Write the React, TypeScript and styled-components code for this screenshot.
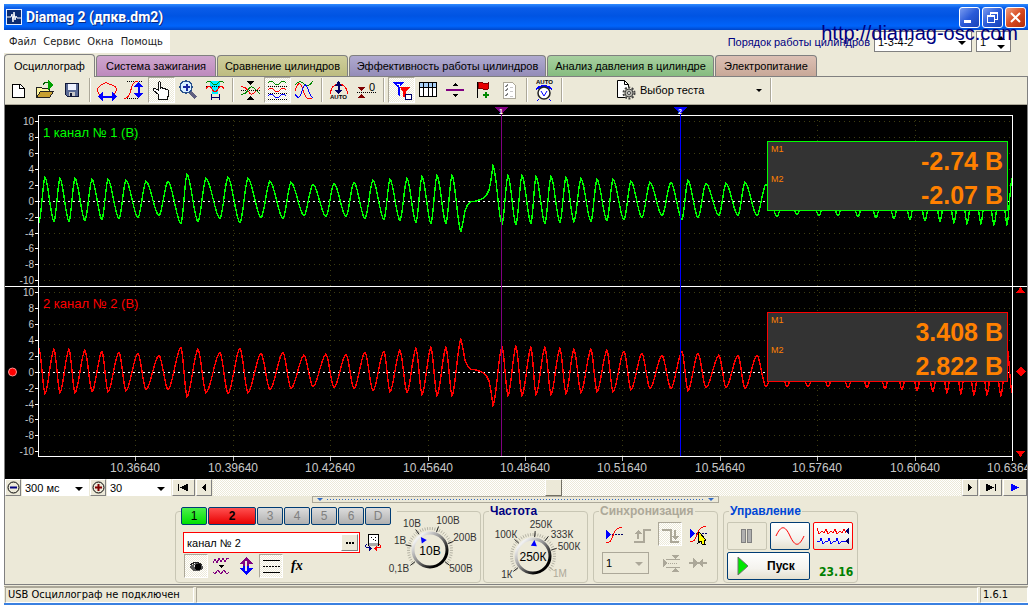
import React from 'react';
import styled, { createGlobalStyle, css } from 'styled-components';

const face = '#ece9d8';
const ui = '"Liberation Sans", Arial, sans-serif';
const tahoma = '"DejaVu Sans Condensed", "DejaVu Sans", sans-serif';

const checker = css`
  background: repeating-conic-gradient(#ffffff 0% 25%, ${face} 0% 50%) 0 0 / 2px 2px;
`;

const Global = createGlobalStyle`
  * { box-sizing: border-box; }
  body { margin: 0; background: #fff; font-family: ${ui}; font-size: 12px; color: #000; }
  button, input, select { font: inherit; color: inherit; margin: 0; padding: 0; border-radius: 0; }
  svg { display: block; }
`;

const Page = styled.div`
  padding: 4px;
`;

const Window = styled.main`
  position: relative;
  background: ${face};
  border-bottom: 2px solid #3a80e0;
`;

const TitleBar = styled.header`
  display: flex;
  align-items: center;
  height: 26px;
  padding: 0 2px;
  background: linear-gradient(#2f8bff 0, #0a5ce8 4px, #0054e3 12px, #0064fb 22px, #0046c8 100%);
`;

const Title = styled.h1`
  flex: 1;
  margin: 0 0 0 4px;
  font: bold 14px/20px Roboto, sans-serif;
  color: #fff;
  text-shadow: 1px 1px 0 #0a2a80;
`;

const CaptionButton = styled.button<{ $red?: boolean }>`
  width: 21px;
  height: 21px;
  margin-left: 2px;
  border: 1px solid #fff;
  border-radius: 3px;
  background: ${p => (p.$red ? 'linear-gradient(135deg, #f0a080, #d84a20 50%, #b02c08)' : 'linear-gradient(135deg, #7a9cf0, #2a5ad8 50%, #1844b8)')};
`;

const MenuRow = styled.div`
  display: flex;
  justify-content: space-between;
  height: 24px;
`;

const Menu = styled.nav`
  display: flex;
  gap: 7px;
  height: 23px;
  width: 166px;
  padding: 0 5px;
  background: #fff;
`;

const MenuItem = styled.a`
  font: 11px/24px ${tahoma};
  color: #222;
  text-decoration: none;
`;

const OrderBox = styled.div`
  display: flex;
  gap: 4px;
  padding: 1px 17px 0 0;
`;

const OrderLabel = styled.label`
  font-size: 11px;
  line-height: 22px;
  color: #000080;
`;

const SelectWrap = styled.span<{ $w: number; $h: number; $border?: string; $spin?: boolean }>`
  position: relative;
  display: block;
  width: ${p => p.$w}px;
  height: ${p => p.$h}px;
  &::after, &::before {
    content: '';
    position: absolute;
    right: 6px;
    top: 50%;
    border: 4px solid transparent;
    border-top-color: ${p => (p.$border === '#aca899' ? '#aca899' : '#000')};
    border-bottom: 0;
    margin-top: ${p => (p.$spin ? 3 : -1)}px;
    pointer-events: none;
  }
  &::before {
    display: ${p => (p.$spin ? 'block' : 'none')};
    margin-top: -6px;
    border-top: 0;
    border-bottom: 4px solid #000;
  }
  select {
    appearance: none;
    width: 100%;
    height: 100%;
    padding: 0 3px;
    border: ${p => (p.$border ? `1px solid ${p.$border}` : '0')};
    background: ${p => (p.$border === '#aca899' ? face : '#fff')};
    opacity: 1;
    font-size: 11px;
  }
`;

const Tabs = styled.div`
  display: flex;
  gap: 1px;
  height: 23px;
  border-bottom: 1px solid #808080;
  align-items: flex-end;
`;

const Tab = styled.button<{ $w: number; $tint: string; $active?: boolean }>`
  width: ${p => p.$w}px;
  height: ${p => (p.$active ? 23 : 21)}px;
  margin-bottom: ${p => (p.$active ? -1 : 0)}px;
  border: 1px solid #808080;
  border-bottom: 0;
  border-radius: 4px 4px 0 0;
  background: ${p => p.$tint};
  font-size: 11px;
  white-space: nowrap;
`;

const Body = styled.div`
  border-left: 1px solid #808080;
  border-right: 1px solid #808080;
  border-bottom: 1px solid #808080;
`;

const Toolbar = styled.div`
  display: flex;
  align-items: center;
  height: 28px;
  padding-bottom: 1px;
  border-bottom: 1px solid #aca899;
`;

const ToolButton = styled.button<{ $on?: boolean }>`
  width: 27px;
  height: 26px;
  border: 1px solid transparent;
  background: transparent;
  ${p => p.$on && css`
    ${checker}
    border-color: #aca899 #fff #fff #aca899;
  `}
  svg { margin: -1px; }
`;

const Separator = styled.i`
  width: 2px;
  height: 24px;
  margin: 0 3px;
  border-left: 1px solid #aca899;
  border-right: 1px solid #fff;
`;

const TestButton = styled.button`
  display: flex;
  align-items: center;
  gap: 4px;
  width: 201px;
  height: 26px;
  padding: 0 4px 0 49px;
  border: 0;
  background: transparent;
  font-size: 11px;
  white-space: nowrap;
  span { flex: 1; text-align: left; }
`;

const Scope = styled.div`
  position: relative;
  background: #000;
  svg { width: 100%; }
`;

const Readout = styled.dl<{ $top: number; $c: string }>`
  position: absolute;
  right: 19px;
  top: ${p => p.$top}px;
  width: 241px;
  height: 70px;
  margin: 0;
  padding: 2px 4px 2px 3px;
  border: 1px solid ${p => p.$c};
  background: #333;
  color: #ff8000;
`;

const ReadoutRow = styled.div`
  display: flex;
  justify-content: space-between;
  height: 30px;
  & + & { height: 34px; }
  dt { font-size: 9px; line-height: 10px; }
  dd { margin: 0; font-weight: bold; font-size: 25px; line-height: 34px; }
  & + & dd { line-height: 42px; }
`;

const ScrollRow = styled.div`
  display: flex;
  height: 17px;
  gap: 1px;
`;

const FlatButton = styled.button<{ $w: number }>`
  display: grid;
  place-items: center;
  flex: none;
  width: ${p => p.$w}px;
  height: 17px;
  border: 1px solid;
  border-color: #fff #808080 #808080 #fff;
  background: ${face};
`;

const Track = styled.div`
  ${checker}
  flex: 1;
  display: flex;
  &::before { content: ''; flex: 5; }
  &::after { content: ''; flex: 6; }
`;

const Thumb = styled.i`
  width: 17px;
  height: 17px;
  border: 1px solid;
  border-color: #fff #716f64 #716f64 #fff;
  background: ${face};
`;

const Splitter = styled.div`
  display: flex;
  align-items: center;
  justify-content: space-between;
  width: 407px;
  height: 7px;
  margin: 0 0 1px 307px;
  padding: 0 4px;
  border: 1px solid #aca899;
  &::before, &::after {
    content: '';
    border: 3px solid transparent;
    border-top-color: #316ac5;
    border-bottom: 0;
  }
  i {
    flex: 1;
    height: 1px;
    margin: 0 4px;
    background: repeating-linear-gradient(90deg, #316ac5 0 1px, transparent 1px 3px);
  }
`;

const Panels = styled.div`
  display: flex;
  align-items: flex-start;
  padding: 0 0 1px 170px;
`;

const ChannelPanel = styled.div`
  display: flex;
  width: 306px;
  height: 72px;
  margin: 7px 2px 0 0;
  border: 1px solid #c8c6b4;
  border-radius: 4px;
`;

const ChannelColumn = styled.div`
  flex: none;
  width: 210px;
`;

const ChannelRow = styled.div`
  display: flex;
  gap: 1px;
  width: 216px;
  margin: -5px 0 7px 5px;
  background: ${face};
`;

const fills = {
  green: 'linear-gradient(#4cf04c, #00e000)',
  red: 'linear-gradient(#ff5050, #e80000)',
  grey: 'linear-gradient(#dcdcdc, #b0b0b0)',
};

const ChannelButton = styled.button<{ $fill: keyof typeof fills }>`
  width: ${p => (p.$fill === 'red' ? 48 : 26)}px;
  height: 18px;
  border: 1px solid #003c74;
  border-radius: 2px;
  background: ${p => fills[p.$fill]};
  color: ${p => (p.$fill === 'grey' ? '#808080' : '#000')};
  font-size: 12px;
  font-weight: ${p => (p.$fill === 'red' ? 'bold' : 'normal')};
`;

const NameRow = styled.div`
  display: flex;
  gap: 4px;
  height: 21px;
  margin: 0 0 1px 7px;
`;

const NameBox = styled.div`
  display: flex;
  width: 177px;
  padding: 1px;
  border: 1px solid #f00;
  background: #fff;
  input { flex: 1; min-width: 0; padding: 0 2px; border: 0; outline: 0; background: transparent; font-size: 11px; }
`;

const IconRow = styled.div<{ $gap: number; $pad?: number }>`
  display: flex;
  align-items: center;
  gap: ${p => p.$gap}px;
  margin-left: ${p => p.$pad || 0}px;
`;

const IconButton = styled.button<{ $on?: boolean }>`
  width: 24px;
  height: 24px;
  border: 1px solid transparent;
  background: transparent;
  ${p => p.$on && css`
    ${checker}
    border-color: #aca899 #fff #fff #aca899;
  `}
  svg { margin: -1px; }
`;

const Group = styled.fieldset<{ $w: number; $gap: number }>`
  width: ${p => p.$w}px;
  height: 79px;
  min-width: 0;
  margin: 0 ${p => p.$gap}px 0 0;
  padding: 0;
  border: 1px solid #c8c6b4;
  border-radius: 4px;
`;

const Legend = styled.legend<{ $c: string }>`
  margin-left: 5px;
  padding: 0 1px;
  font-weight: bold;
  font-size: 12px;
  line-height: 14px;
  color: ${p => p.$c};
`;

const SyncBody = styled.div`
  display: grid;
  gap: 5px;
  padding: 4px 0 0 8px;
`;

const ControlGrid = styled.div`
  display: grid;
  grid-template-columns: 40px 40px 40px;
  grid-template-rows: 28px 28px;
  gap: 2px 3px;
  padding: 4px 0 0 3px;
`;

const ControlButton = styled.button<{ $c: string }>`
  display: grid;
  place-items: center;
  border: 1px solid ${p => p.$c};
  border-radius: 2px;
  background: linear-gradient(#fff, #f4f3ee 60%, #e4e0d0);
  &:disabled { background: ${face}; }
`;

const StartButton = styled(ControlButton)`
  grid-column: span 2;
  display: flex;
  align-items: center;
  gap: 18px;
  padding-left: 9px;
  font-weight: bold;
  font-size: 12px;
`;

const Version = styled.output`
  align-self: center;
  padding: 12px 0 0 6px;
  font: bold 12px/14px ${tahoma};
  color: #008000;
`;

const StatusBar = styled.footer`
  display: flex;
  gap: 2px;
  height: 17px;
  margin-top: 1px;
  border-top: 1px solid #aca899;
  padding-left: 1px;
`;

const StatusCell = styled.span<{ $w?: number }>`
  flex: ${p => (p.$w ? 'none' : 1)};
  width: ${p => (p.$w ? `${p.$w}px` : 'auto')};
  padding-left: 2px;
  border: 1px solid;
  border-color: #aca899 #fff #fff #aca899;
  font: 11px/14px ${tahoma};
  white-space: nowrap;
  overflow: hidden;
`;

const Watermark = styled.a`
  position: absolute;
  right: 10px;
  top: 17px;
  font-size: 20px;
  line-height: 24px;
  color: #000080;
  text-decoration: none;
`;

/* ---------- icons ---------- */

const T = ({ children, w = 27, h = 26 }: { children: React.ReactNode; w?: number; h?: number }) => (
  <svg width={w} height={h} viewBox={`0 0 ${w} ${h}`} fill="none" shapeRendering="crispEdges" aria-hidden="true">
    {children}
  </svg>
);

const wave = (y: number, a: number) => `M4 ${y}q3 ${-a * 2} 6 0t6 0t6 0`;

type Tool = { name: string; on?: boolean; art: React.ReactNode } | null;

const tools: Tool[] = [
  { name: 'Новый', art: <T><path d="M7.500 7.500h8l4 4v9h-12z" fill="#fff" stroke="#000" /><path d="M14.500 7.500v4h4" stroke="#000" /></T> },
  { name: 'Открыть', art: <T>
    <path d="M4.500 20.500v-10h5l1 1h7v3" fill="#fdf6a0" stroke="#222" /><path d="M4.500 20.500l4-6h13l-4 6z" fill="#c8a030" stroke="#222" />
    <path d="M16 3l6 5l-6 5z" fill="#00a000" /><path d="M11 8q2-4 5-2" stroke="#006000" /></T> },
  { name: 'Сохранить', art: <T>
    <path d="M6.500 6.500h13v13h-11l-2-2z" fill="#5a6a94" stroke="#101838" /><path d="M9 7h8v6h-8z" fill="#eef2ff" /><path d="M10 15h6v4h-6z" fill="#c8c8c8" /><path d="M11 16h2v3h-2z" fill="#101838" /></T> },
  null,
  { name: 'Развёртка', art: <T>
    <path d="M6 18q-5-5 0-9t7-3t7 3t0 9" stroke="#f00" /><path d="M5 19.500h17" stroke="#00f" strokeWidth="2" /><path d="M9 15v9l-5-4.500zM18 15v9l5-4.500z" fill="#00f" /></T> },
  { name: 'Усиление', art: <T>
    <path d="M6 4.500h16M4 21.500h14" stroke="#000" strokeDasharray="1 1" /><path d="M3 21.500q5 0 7-9t7-8" stroke="#f00" />
    <path d="M17.500 8v10" stroke="#00f" strokeWidth="2" /><path d="M13 10h9l-4.500-5zM13 16h9l-4.500 5z" fill="#00f" /></T> },
  { name: 'Рука', on: true, art: <T>
    <path d="M10.500 20.500v-3l-5-4v-2h2l3 2v-8q1-2 2 0v6q1-2 2-1v1q1-1 3 0v1q1-1 3 1v5l-1 2v2h-9z" fill="#fff" stroke="#111" /></T> },
  { name: 'Масштаб', art: <T>
    <path d="M15 15l6 6" stroke="#606080" strokeWidth="3" /><circle cx="11" cy="10" r="6" fill="#d8f0ff" stroke="#28508c" strokeWidth="1.500" /><path d="M8 10h7M11.500 6.500v7" stroke="#1828a0" strokeWidth="2" /></T> },
  { name: 'Интервал', art: <T>
    <path d="M8 4h10v4l-2 4v5h-6v-5l-2-4z" fill="#00f0ff" /><path d={wave(6, 2)} stroke="#080" /><path d="M4 9.500h18" stroke="#000" strokeDasharray="1 1" /><path d={wave(12, 3)} stroke="#f00" />
    <path d="M9.500 17v6M17.500 17v6M10 20.500h7" stroke="#006" /></T> },
  null,
  { name: 'Наложить', art: <T>
    <path d="M4 13.500h19" stroke="#000" strokeDasharray="1 1" /><path d="M4 10q4-1 7 4t6 2t6-6" stroke="#f00" /><path d="M4 17q4 1 7-4t6-2t6 6" stroke="#080" /><path d="M10 4h7l-3.500 4zM10 23h7l-3.500-4z" fill="#000" /></T> },
  { name: 'Раздельно', on: true, art: <T>
    <path d={wave(6, 2)} stroke="#080" /><path d="M4 9.500h19M4 16.500h19M4 22.500h19" stroke="#000" strokeDasharray="1 1" /><path d={wave(13, 2)} stroke="#f00" /><path d={wave(19, 2)} stroke="#00f" /></T> },
  { name: 'Вместе', art: <T>
    <path d="M4 8q5-6 9-1t9-3" stroke="#080" /><path d="M4 14q4-14 8-1t10 7" stroke="#f00" /><path d="M4 17q4 8 7-3t6-2t5 8" stroke="#00f" /></T> },
  null,
  { name: 'Авто', art: <T>
    <path d="M5 17q-1-6 4-9t9 1t3 8" stroke="#f00" /><path d="M12.500 7v8" stroke="#006" strokeWidth="2" /><path d="M9 9h7l-3.500-5zM9 13h7l-3.500 4z" fill="#006" />
    <text x="4" y="22" fontSize="6" fontWeight="bold" fill="#000">AUTO</text></T> },
  { name: 'Сброс нуля', art: <T>
    <path d="M4 15.500h19" stroke="#000" strokeDasharray="1 1" /><path d="M5 10h7l-3.500 4zM5 21h7l-3.500-4z" fill="#800000" /><text x="16" y="14" fontSize="11" fill="#000">0</text></T> },
  null,
  { name: 'Маркеры', on: true, art: <T>
    <path d="M5 5h11l-4 5v9l-2-1v-7z" fill="#00f" /><path d="M12 10h10l-4 5v6l-3-1v-5z" fill="#f00" /><path d="M9 7h2v3" stroke="#fff" /><path d="M17.500 17.500h6v5h-6z" fill="#fff" stroke="#006" /></T> },
  { name: 'Таблица', art: <T>
    <path d="M4.500 5.500h17v14h-17z" fill="#fff" stroke="#000" /><path d="M5 6h16v4h-16z" fill="#a8d0f8" /><path d="M4 10.500h18M8.500 6v14M13.500 6v14M17.500 6v14" stroke="#000" /></T> },
  { name: 'Разделитель', art: <T>
    <path d="M4 13h18" stroke="#800080" strokeWidth="2" /><path d="M10 9h6l-3-3zM10 17h6l-3 3z" fill="#000" /></T> },
  { name: 'Флаг', art: <T>
    <path d="M8.500 5v16" stroke="#000" /><path d="M9 6q3-2 5 0t5 0v6q-2 2-5 0t-5 0z" fill="#e80000" stroke="#800000" /><path d="M14 18h6M17 15v6" stroke="#080" strokeWidth="2" /></T> },
  { name: 'Список', art: <T>
    <path d="M7.500 5.500h9l3 3v13h-12z" fill="#fff" stroke="#aca899" /><path d="M9 9l1 1l2-3M9 13l1 1l2-3M9 18l1 1l2-3" stroke="#808080" /><path d="M14 10h3M14 14h3M14 19h3" stroke="#c8c8c8" /></T> },
  null,
  { name: 'Автоматическое измерение', art: <T>
    <text x="5" y="7" fontSize="6" fontWeight="bold" fill="#000">AUTO</text><path d="M5 12q8-6 16 0" stroke="#00f" strokeWidth="2" /><circle cx="13" cy="16" r="6" fill="#fff" stroke="#222" strokeWidth="1.500" shapeRendering="auto" />
    <path d="M10 14l3 5l3-5M8 22l-2 2M18 22l2 2" stroke="#00f" shapeRendering="auto" /></T> },
  null,
];

/* ---------- signal data: alternating extremes of the first channel ---------- */

const points: [number, number][] = [
  [39, 223], [45, 177], [54, 222], [60, 178], [69, 222], [75, 178], [85, 221], [92, 179], [102, 220], [108, 179],
  [119, 219], [126, 180], [138, 218], [146, 181], [159, 216], [168, 181], [181, 224], [187, 174], [198, 222], [206, 178],
  [220, 219], [228, 177], [240, 223], [248, 178], [261, 218], [270, 181], [283, 219], [291, 182], [304, 216], [313, 184],
  [326, 217], [334, 183], [346, 217], [354, 182], [365, 219], [373, 180], [384, 220], [390, 179], [400, 221], [407, 178],
  [416, 223], [422, 176], [431, 224], [437, 175], [446, 224], [452, 175], [461, 232],
];
const gap: [number, number][] = [[463, 222], [465, 211], [467, 206], [470, 202], [476, 201], [482, 199], [486, 196], [489, 190], [491, 180], [493, 165]];
const tail: [number, number][] = [
  [493, 165], [502, 225], [508, 175], [516, 225], [522, 175], [531, 224], [536, 176], [545, 224], [551, 176], [560, 223], [566, 177],
  [574, 222], [581, 178], [591, 222], [597, 179], [607, 221], [613, 179], [624, 220], [631, 181], [642, 218], [650, 182],
  [662, 216], [671, 182], [682, 220], [688, 180], [698, 218], [706, 183], [719, 216], [726, 183], [738, 216], [745, 182],
  [757, 216], [766, 184], [777, 217], [787, 184], [797, 215], [808, 184], [819, 216], [828, 184], [838, 216], [848, 183],
  [858, 217], [867, 183], [876, 218], [885, 182], [894, 219], [902, 181], [910, 220], [917, 180], [925, 221], [933, 179],
  [940, 222], [947, 178], [954, 223], [961, 177], [967, 224], [974, 176], [981, 224], [987, 176], [994, 225], [1001, 175],
  [1007, 225], [1012, 178],
];

const smooth = (list: [number, number][]) => {
  const out: [number, number][] = [list[0]];
  for (let i = 1; i < list.length; i++) {
    const [x0, y0] = list[i - 1];
    const [x1, y1] = list[i];
    for (let x = x0 + 1; x <= x1; x++) {
      const t = (x - x0) / (x1 - x0);
      const ease = (1 - Math.cos(Math.PI * t)) / 2;
      out.push([x, y0 + (y1 - y0) * (0.7 * ease + 0.3 * t)]);
    }
  }
  return out;
};

const trace = [...smooth(points), ...gap, ...smooth(tail)];
const line = (f: (y: number) => number) => trace.map(([x, y]) => `${x},${Math.round(f(y) * 10) / 10}`).join(' ');

const ticks1 = [121, 137, 153, 169, 185, 201, 217, 233, 248, 264, 280];
const ticks2 = ticks1.map(y => y + 171);
const columns = [135, 233, 330, 428, 525, 622, 720, 817, 915];
const times = ['10.36640', '10.39640', '10.42640', '10.45640', '10.48640', '10.51640', '10.54640', '10.57640', '10.60640'];

const Chart = () => (
  <svg viewBox="5 105 1022 374" fontFamily={ui} shapeRendering="crispEdges" role="img" aria-label="Осциллограмма">
    {[...ticks1, ...ticks2].map(y => (
      <path key={y} d={`M44 ${y}.5H1010`} stroke="#3c3c10" strokeDasharray="1 4" />
    ))}
    {columns.map(x => (
      <g key={x}>
        <path d={`M${x}.500 120V456`} stroke="#3c3c10" strokeDasharray="1 4" />
        <path d={`M${x}.500 457v4`} stroke="#c0c0c0" />
      </g>
    ))}
    <path d="M38 201.500H1012M38 372.500H1012" stroke="#fff" strokeDasharray="2 3" />
    <polyline points={line(y => y)} fill="none" stroke="#00ff00" strokeWidth="1.400" strokeLinejoin="round" />
    <polyline points={line(y => 571 - y)} fill="none" stroke="#ff0000" strokeWidth="1.400" strokeLinejoin="round" />
    <path d="M38.500 456.500V115.500H1012.500V456.500zM5 286.500H1027M1012.500 457v4" fill="none" stroke="#fff" />
    {[ticks1, ticks2].map(list => list.map((y, i) => (
      <g key={y}>
        <path d={`M35 ${y}.5h3`} stroke="#fff" />
        <text x="34" y={y + 4} fontSize="10" fill="#c8c8c8" textAnchor="end">{10 - i * 2}</text>
      </g>
    )))}
    <text x="43" y="137" fontSize="13" fill="#00ff00">1 канал № 1 (В)</text>
    <text x="43" y="308" fontSize="13" fill="#ff0000">2 канал № 2 (В)</text>
    {times.map((t, i) => (
      <text key={t} x={columns[i]} y="472" fontSize="12" fill="#c8c8c8" textAnchor="middle">{t}</text>
    ))}
    <text x="987" y="472" fontSize="12" fill="#c8c8c8">10.63640</text>
    <path d="M501.500 110V456" stroke="#800080" />
    <path d="M494 107h15l-7.500 7z" fill="#800080" />
    <text x="501" y="114" fontSize="7" fontWeight="bold" fill="#fff" textAnchor="middle">1</text>
    <path d="M680.500 110V456" stroke="#0000ff" />
    <path d="M673 107h15l-7.500 7z" fill="#0000ff" />
    <text x="680" y="114" fontSize="7" fontWeight="bold" fill="#fff" textAnchor="middle">2</text>
    <circle cx="12.500" cy="372" r="4" fill="#f00" stroke="#ff9090" shapeRendering="auto" />
    <path d="M1016 293h9l-4.500-6zM1016 451h9l-4.500 6zM1015.500 371.500l5-5l5 5l-5 5z" fill="#f00" />
  </svg>
);

/* ---------- knobs ---------- */

type Mark = { t: string; x: number; y: number; a: number; off?: boolean };

const Knob = ({ id, x, w, cx, value, marks, pointer }: { id: string; x: number; w: number; cx: number; value: string; marks: Mark[]; pointer: number }) => {
  const cy = 556;
  const minor = Array.from({ length: 41 }, (_, i) => -130 + i * 6.5);
  const ray = (a: number, r0: number, r1: number) => {
    const s = Math.sin((a * Math.PI) / 180);
    const c = -Math.cos((a * Math.PI) / 180);
    return `M${cx + s * r0} ${cy + c * r0}L${cx + s * r1} ${cy + c * r1}`;
  };
  return (
    <svg width={w} height="64" viewBox={`${x} 518 ${w} 64`} fontFamily={ui} role="img" aria-label={value}>
      <defs>
        <linearGradient id={`${id}-rim`} x1="0" y1="0" x2="1" y2="1">
          <stop offset="0.150" stopColor="#f0f0f0" />
          <stop offset="0.450" stopColor="#909090" />
          <stop offset="0.800" stopColor="#000" />
        </linearGradient>
      </defs>
      {minor.map(a => <path key={a} d={ray(a, 20, 23)} stroke="#b4b2a4" />)}
      {marks.map(m => <path key={m.t} d={ray(m.a, 19, 25)} stroke={m.off ? '#aca899' : '#222'} />)}
      <circle cx={cx} cy={cy} r="17" fill={face} stroke={`url(#${id}-rim)`} strokeWidth="3" />
      <path d="M-3 3h6l-3-6z" fill="#00f" transform={`rotate(${pointer} ${cx} ${cy}) translate(${cx} ${cy - 13})`} />
      {marks.map(m => (
        <text key={m.t} x={m.x} y={m.y + 3} fontSize="10" fill={m.off ? '#aca899' : '#333'} textAnchor="middle">{m.t}</text>
      ))}
      <text x={cx} y={cy + 5} fontSize="12" fill="#000" textAnchor="middle">{value}</text>
    </svg>
  );
};

const Tri = ({ d, c = '#000' }: { d: string; c?: string }) => (
  <svg width="14" height="11" shapeRendering="crispEdges" aria-hidden="true"><path d={d} fill={c} /></svg>
);

const Round = ({ c, plus }: { c: string; plus?: boolean }) => (
  <svg width="13" height="13" aria-hidden="true">
    <circle cx="6.500" cy="6.500" r="5.500" fill={face} stroke="#000" />
    <path d={plus ? 'M3 6.500h7M6.500 3v7' : 'M3 6.500h7'} stroke={c} strokeWidth="2" />
  </svg>
);

export default function App() {
  return (
    <Page>
      <Global />
      <Window>
        <TitleBar>
          <svg width="16" height="16" viewBox="0 0 16 16" aria-hidden="true">
            <path d="M0 0h16v16H0z" fill="#e8f0ff" /><path d="M1 1h14v14H1z" fill="#0c2c70" />
            <path d="M1 8h4l1-3l1 8l1-10l1 8l1-4l1 2h4" stroke="#fff" fill="none" />
          </svg>
          <Title>Diamag 2 (дпкв.dm2)</Title>
          <CaptionButton aria-label="Свернуть"><svg width="19" height="19"><path d="M4 12h7v3H4z" fill="#fff" /></svg></CaptionButton>
          <CaptionButton aria-label="Восстановить"><svg width="19" height="19" fill="none" stroke="#fff" shapeRendering="crispEdges"><path d="M7.500 7V4.500h7v7H12M7 5.500h8M4.500 7.500h7v7h-7zM4 8.500h8" /></svg></CaptionButton>
          <CaptionButton $red aria-label="Закрыть"><svg width="19" height="19"><path d="M5 5l9 9M14 5l-9 9" stroke="#fff" strokeWidth="2" /></svg></CaptionButton>
        </TitleBar>

        <MenuRow>
          <Menu>
            {['Файл', 'Сервис', 'Окна', 'Помощь'].map(m => <MenuItem key={m} href="#">{m}</MenuItem>)}
          </Menu>
          <OrderBox>
            <OrderLabel htmlFor="order">Порядок работы цилиндров</OrderLabel>
            <SelectWrap $w={98} $h={21} $border="#808080"><select id="order"><option>1-3-4-2</option></select></SelectWrap>
            <SelectWrap $w={35} $h={21} $border="#808080" $spin><select aria-label="Цилиндр"><option>1</option></select></SelectWrap>
          </OrderBox>
        </MenuRow>

        <Tabs role="tablist">
          <Tab role="tab" $active $w={91} $tint={face}>Осциллограф</Tab>
          <Tab role="tab" $w={120} $tint="linear-gradient(#cfa6cf, #bd8abd)">Система зажигания</Tab>
          <Tab role="tab" $w={131} $tint="linear-gradient(#cfce9c, #bdbc80)">Сравнение цилиндров</Tab>
          <Tab role="tab" $w={197} $tint="linear-gradient(#b0aad0, #948cb8)">Эффективность работы цилиндров</Tab>
          <Tab role="tab" $w={167} $tint="linear-gradient(#a8d0a0, #86bc80)">Анализ давления в цилиндре</Tab>
          <Tab role="tab" $w={102} $tint="linear-gradient(#dcc0b4, #c8a898)">Электропитание</Tab>
        </Tabs>

        <Body>
          <Toolbar role="toolbar">
            {tools.map((t, i) => (t ? <ToolButton key={i} $on={t.on} aria-label={t.name}>{t.art}</ToolButton> : <Separator key={i} />))}
            <TestButton>
              <svg width="21" height="22" viewBox="0 0 21 22" fill="none" aria-hidden="true">
                <path d="M2.500 1.500h7l4 4v13h-11z" fill="#fff" stroke="#000" /><path d="M9.500 1.500v4h4" stroke="#000" />
                <circle cx="14" cy="14" r="5.500" fill={face} stroke="#444" strokeWidth="2" strokeDasharray="2 1.500" /><circle cx="14" cy="14" r="4" fill="#b8b8b0" stroke="#444" /><circle cx="14" cy="14" r="1.500" fill="#fff" stroke="#444" />
              </svg>
              <span>Выбор теста</span>
              <svg width="8" height="5" aria-hidden="true"><path d="M1 1h6l-3 3z" fill="#000" /></svg>
            </TestButton>
            <Separator />
          </Toolbar>

          <Scope>
            <Chart />
            <Readout $top={36} $c="#00ff00">
              <ReadoutRow><dt>М1</dt><dd>-2.74 В</dd></ReadoutRow>
              <ReadoutRow><dt>М2</dt><dd>-2.07 В</dd></ReadoutRow>
            </Readout>
            <Readout $top={207} $c="#ff0000">
              <ReadoutRow><dt>М1</dt><dd>3.408 В</dd></ReadoutRow>
              <ReadoutRow><dt>М2</dt><dd>2.822 В</dd></ReadoutRow>
            </Readout>
          </Scope>

          <ScrollRow>
            <FlatButton $w={16} aria-label="Уменьшить"><Round c="#000080" /></FlatButton>
            <SelectWrap $w={67} $h={17}><select aria-label="Длительность"><option>300 мс</option></select></SelectWrap>
            <FlatButton $w={16} aria-label="Увеличить"><Round c="#800000" plus /></FlatButton>
            <SelectWrap $w={64} $h={17}><select aria-label="Масштаб"><option>30</option></select></SelectWrap>
            <FlatButton $w={23} aria-label="В начало"><Tri d="M1 2h1v7H1zM3 5.500l8-4v8z" /></FlatButton>
            <FlatButton $w={16} aria-label="Назад"><Tri d="M5 5.500l4-4v8z" /></FlatButton>
            <Track><Thumb /></Track>
            <FlatButton $w={16} aria-label="Вперёд"><Tri d="M9 5.500l-4-4v8z" /></FlatButton>
            <FlatButton $w={23} aria-label="В конец"><Tri d="M11 2h1v7h-1zM10 5.500l-8-4v8z" /></FlatButton>
            <FlatButton $w={24} aria-label="Проиграть"><Tri d="M11 5.500l-8-4v8z" c="#00f" /></FlatButton>
          </ScrollRow>

          <Splitter><i /></Splitter>

          <Panels>
            <ChannelPanel role="group" aria-label="Каналы">
              <ChannelColumn>
                <ChannelRow>
                  <ChannelButton $fill="green">1</ChannelButton>
                  <ChannelButton $fill="red">2</ChannelButton>
                  {['3', '4', '5', '6', 'D'].map(c => <ChannelButton key={c} $fill="grey">{c}</ChannelButton>)}
                </ChannelRow>
                <NameRow>
                  <NameBox>
                    <input aria-label="Имя канала" defaultValue="канал № 2" />
                    <FlatButton $w={17} aria-label="Выбрать имя"><Tri d="M3 5h2v2H3zM6 5h2v2H6zM9 5h2v2H9z" /></FlatButton>
                  </NameBox>
                  <svg width="19" height="21" viewBox="0 0 19 21" fill="none" aria-hidden="true" shapeRendering="crispEdges">
                    <path d="M4.500 2.500h10v11h-10z" fill="#fff" stroke="#000" /><path d="M5 11h9v3H5z" fill="#aaa" /><path d="M7 5h1M11 5h1M9 7h1M11 8h1" stroke="#000" />
                    <path d="M3 12q-4 4 3 4" stroke="#000080" /><path d="M5 13v7l3-3.500z" fill="#000080" /><path d="M15 12q4 4-2 4" stroke="#f00" /><path d="M13 13v7l-3-3.500z" fill="#f00" />
                  </svg>
                </NameRow>
                <IconRow $gap={1} $pad={8}>
                  <IconButton $on aria-label="Показать канал"><T w={24} h={24}><path d="M6 13q6-7 13-1v3q-6 4-11 1z" fill="#555" /><path d="M9 12q4-3 8 0q-3 4-8 0" fill="#ddd" /><circle cx="14" cy="13" r="3" fill="#000" /><path d="M6 11q6-5 12 0" stroke="#222" /></T></IconButton>
                  <IconButton aria-label="Фильтр"><T w={24} h={24}><path d="M4 9l2-4l2 4l2-5l2 4l2-4l2 4l2-4l2 0M4 18l2 2l3-4l3 4l3-4l3 4l2-2" stroke="#800080" /><path d="M9 11h6l-3 3z" fill="#000" /></T></IconButton>
                  <IconButton aria-label="Инверсия"><T w={24} h={24}><path d="M12 3l7 7h-4v2H9v-2H5z" fill="#800080" /><path d="M12 21l7-7h-4v-2H9v2H5z" fill="#00f" /><path d="M12 7v10" stroke={face} strokeWidth="2" /></T></IconButton>
                  <IconButton $on aria-label="Линии"><T w={24} h={24}><path d="M4 6.500h17M4 18.500h17" stroke="#000" /><path d="M4 12.500h17" stroke="#000" strokeDasharray="2 1" /></T></IconButton>
                  <IconButton aria-label="Функция"><T w={24} h={24}><text x="7" y="16" fontFamily="Liberation Serif, serif" fontStyle="italic" fontWeight="bold" fontSize="14" fill="#000">fx</text></T></IconButton>
                </IconRow>
              </ChannelColumn>
              <Knob id="volt" x={386} w={93} cx={430} value="10В" pointer={-35} marks={[
                { t: '0,1В', x: 399, y: 575, a: -128 }, { t: '1В', x: 400, y: 547, a: -78 }, { t: '10В', x: 412, y: 530, a: -35 },
                { t: '100В', x: 448, y: 527, a: 20 }, { t: '200В', x: 465, y: 544, a: 70 }, { t: '500В', x: 461, y: 575, a: 128 },
              ]} />
            </ChannelPanel>

            <Group $w={105} $gap={5}>
              <Legend $c="#000080">Частота</Legend>
              <Knob id="freq" x={484} w={103} cx={533} value="250К" pointer={5} marks={[
                { t: '1К', x: 507, y: 575, a: -128 }, { t: '100К', x: 506, y: 535, a: -48 }, { t: '250К', x: 541, y: 525, a: 5 },
                { t: '333К', x: 562, y: 535, a: 38 }, { t: '500К', x: 569, y: 547, a: 72 }, { t: '1М', x: 560, y: 574, a: 125, off: true },
              ]} />
            </Group>

            <Group $w={125} $gap={5}>
              <Legend $c="#aca899">Синхронизация</Legend>
              <SyncBody>
                <IconRow $gap={4}>
                  <IconButton aria-label="Уровень"><T w={24} h={24}><path d="M4 12.500h17" stroke="#006" strokeDasharray="2 1" /><path d="M4 8v9l5-4.500z" fill="#00f" /><path d="M4 20.500q5 1 7-7t9-8" stroke="#f00" /></T></IconButton>
                  <IconButton disabled aria-label="Фронт"><T w={24} h={24}><path d="M4 19.500h9.500v-12h7" stroke="#aca899" strokeWidth="2" /><path d="M8 10v7" stroke="#aca899" strokeWidth="2" /><path d="M4 12h8l-4-4z" fill="#aca899" /></T></IconButton>
                  <IconButton $on disabled aria-label="Спад"><T w={24} h={24}><path d="M4 7.500h8.500v12h8" stroke="#aca899" strokeWidth="2" /><path d="M17 8v7" stroke="#aca899" strokeWidth="2" /><path d="M13 14h8l-4 4z" fill="#aca899" /></T></IconButton>
                  <IconButton aria-label="Установка уровня"><T w={24} h={24}><path d="M4 11.500h17" stroke="#006" strokeDasharray="2 1" /><path d="M4 7v9l5-4.500z" fill="#00f" /><path d="M4 19.500q5 1 7-7t9-8" stroke="#f00" /><path d="M13 10l7 8l-2 1l1 3h-3l-1-3l-3 2z" fill="#ff0" stroke="#000" /></T></IconButton>
                </IconRow>
                <IconRow $gap={3}>
                  <SelectWrap $w={47} $h={22} $border="#aca899"><select disabled aria-label="Канал синхронизации"><option>1</option></select></SelectWrap>
                  <IconRow $gap={3} $pad={7}>
                    <IconButton disabled aria-label="Порог"><T w={24} h={24}><path d="M4 8v8l5-4z" fill="#aca899" /><path d="M7 12.500h12" stroke="#aca899" strokeDasharray="1 1" /><path d="M7 8.500h14M7 16.500h14" stroke="#aca899" /><path d="M12 4h8l-4 4zM12 21h8l-4-4z" fill="#aca899" /></T></IconButton>
                    <IconButton disabled aria-label="Сжать"><T w={24} h={24}><path d="M3 12h18" stroke="#aca899" strokeWidth="2" /><path d="M7 7v10l5-5zM17 7v10l-5-5z" fill="#aca899" /></T></IconButton>
                  </IconRow>
                </IconRow>
              </SyncBody>
            </Group>

            <Group $w={135} $gap={0}>
              <Legend $c="#0046d5">Управление</Legend>
              <ControlGrid>
                <ControlButton $c="#c8c6b4" disabled aria-label="Пауза"><T w={14} h={16}><path d="M1.500 1.500h4v13h-4zM7.500 1.500h4v13h-4z" fill="#b0b0b0" stroke="#808080" /></T></ControlButton>
                <ControlButton $c="#003c74" aria-label="Синусоида"><svg width="30" height="22" fill="none"><path d="M1 11c5-11 9-11 14 0s9 11 14 0" stroke="#f00" /></svg></ControlButton>
                <ControlButton $c="#ff0000" aria-label="Сигналы"><T w={34} h={20}>
                  <path d="M1 2l2 6l3-3l2 2l2-4l2 5l3-3l2 2l2-4l2 5l3-3l2 2l2-4l2 4" stroke="#f00" /><path d="M1 15h3l1-3l2 6l3-3h2l1-3l2 6l3-3h2l1-3l2 6l3-3h4" stroke="#00f" /><path d="M33 2v6l-4-3zM33 12v6l-4-3z" fill="#006" /></T></ControlButton>
                <StartButton $c="#003c74"><svg width="12" height="20" aria-hidden="true"><path d="M1 1l10 9l-10 9z" fill="#00e800" stroke="#707070" /></svg>Пуск</StartButton>
                <Version>23.16</Version>
              </ControlGrid>
            </Group>
          </Panels>
        </Body>

        <StatusBar>
          <StatusCell $w={189}>USB Осциллограф не подключен</StatusCell>
          <StatusCell>{' '}</StatusCell>
          <StatusCell $w={48}>1.6.1</StatusCell>
        </StatusBar>
        <Watermark href="http://diamag-osc.com">http://diamag-osc.com</Watermark>
      </Window>
    </Page>
  );
}
